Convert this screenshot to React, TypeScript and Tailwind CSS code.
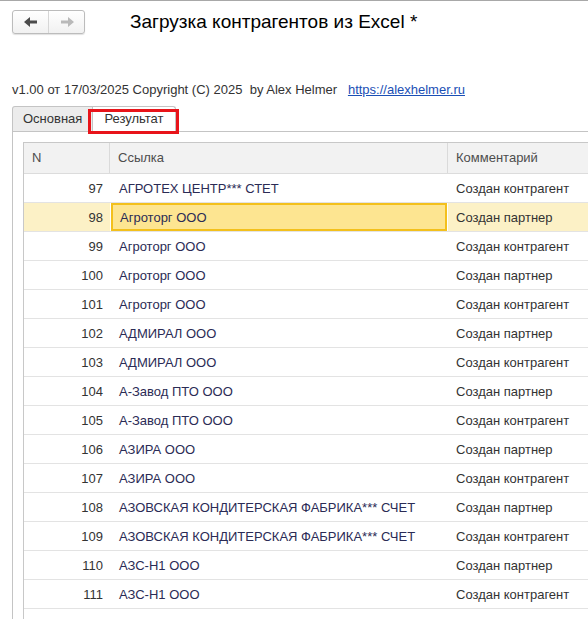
import React from "react";

interface Row {
  n: number;
  ref: string;
  comment: string;
}

const rows: Row[] = [
  { n: 97, ref: "АГРОТЕХ ЦЕНТР*** СТЕТ", comment: "Создан контрагент" },
  { n: 98, ref: "Агроторг ООО", comment: "Создан партнер" },
  { n: 99, ref: "Агроторг ООО", comment: "Создан контрагент" },
  { n: 100, ref: "Агроторг ООО", comment: "Создан партнер" },
  { n: 101, ref: "Агроторг ООО", comment: "Создан контрагент" },
  { n: 102, ref: "АДМИРАЛ ООО", comment: "Создан партнер" },
  { n: 103, ref: "АДМИРАЛ ООО", comment: "Создан контрагент" },
  { n: 104, ref: "А-Завод ПТО ООО", comment: "Создан партнер" },
  { n: 105, ref: "А-Завод ПТО ООО", comment: "Создан контрагент" },
  { n: 106, ref: "АЗИРА ООО", comment: "Создан партнер" },
  { n: 107, ref: "АЗИРА ООО", comment: "Создан контрагент" },
  { n: 108, ref: "АЗОВСКАЯ КОНДИТЕРСКАЯ ФАБРИКА*** СЧЕТ", comment: "Создан партнер" },
  { n: 109, ref: "АЗОВСКАЯ КОНДИТЕРСКАЯ ФАБРИКА*** СЧЕТ", comment: "Создан контрагент" },
  { n: 110, ref: "АЗС-Н1 ООО", comment: "Создан партнер" },
  { n: 111, ref: "АЗС-Н1 ООО", comment: "Создан контрагент" },
  { n: 112, ref: "АСНТ-РЕНТ ООО", comment: "Создан партнер" },
];

const SELECTED = 98;

function Arrow({ dir, color }: { dir: "left" | "right"; color: string }) {
  return (
    <svg width="14" height="10" viewBox="0 0 14 10" className={dir === "right" ? "rotate-180" : ""}>
      <path d="M0 5 L6 0 L6 3.5 L13 3.5 L13 6.5 L6 6.5 L6 10 Z" fill={color} />
    </svg>
  );
}

export default function App() {
  return (
    <div
      className="relative h-[619px] w-[588px] overflow-hidden bg-white border-t border-[#a8a8a8] text-[#333]"
      style={{ fontFamily: '"Liberation Sans", Arial, sans-serif' }}
    >
      {/* Header: nav + title */}
      <div className="flex items-center pl-3 pt-2 h-[33px]">
        <div className="flex h-[24px] w-[73px] rounded-[3px] border border-[#bcbcbc] bg-gradient-to-b from-white to-[#f1f1f1] shadow-[0_1px_1px_rgba(0,0,0,0.12)]">
          <div className="flex w-[36px] items-center justify-center border-r border-[#d6d6d6]">
            <Arrow dir="left" color="#4b4b4b" />
          </div>
          <div className="flex flex-1 items-center justify-center">
            <Arrow dir="right" color="#b9b9b9" />
          </div>
        </div>
        <div className="ml-[45px] text-[19px] leading-none text-black">
          Загрузка контрагентов из Excel *
        </div>
      </div>

      {/* Version line */}
      <div className="mt-[48px] pl-3 text-[13px] leading-[16px] text-[#333] whitespace-pre">
        {"v1.00 от 17/03/2025 Copyright (C) 2025  by Alex Helmer   "}
        <span className="text-[#1a4fb5] underline">https://alexhelmer.ru</span>
      </div>

      {/* Tabs */}
      <div className="mt-[8px] flex pl-3 h-[25px]">
        <div className="flex items-center rounded-tl-[3px] border border-b-0 border-[#c4c4c4] bg-[#ececec] px-[10px] text-[13px] text-[#333]">
          Основная
        </div>
        <div className="flex w-[83px] items-center rounded-tr-[3px] border border-l-0 border-b-0 border-[#c4c4c4] bg-white pl-[11px] text-[13px] text-[#333]">
          Результат
        </div>
      </div>

      {/* Panel */}
      <div className="ml-3 border-l border-t border-[#c4c4c4] pl-[10px] pt-[10px] h-[500px]">
        <div className="border-l border-t border-[#c8c8c8] w-[600px]">
          {/* Table header */}
          <div className="flex h-[31px] bg-[#f2f2f2] border-b border-[#dcdcdc] text-[13px] text-[#4d4d4d]">
            <div className="flex w-[86px] items-center border-r border-[#dadada] pl-[8px]">N</div>
            <div className="flex w-[338px] items-center border-r border-[#dadada] pl-[8px]">Ссылка</div>
            <div className="flex flex-1 items-center pl-[8px]">Комментарий</div>
          </div>
          {rows.map((r) => {
            const sel = r.n === SELECTED;
            return (
              <div
                key={r.n}
                className={
                  "flex h-[29px] border-b border-[#e3e3e3] text-[13px] " +
                  (sel ? "bg-[#fcf1c6]" : "bg-white")
                }
              >
                <div className="flex w-[86px] items-center justify-end pr-[7px] pt-[2px] text-[#333]">{r.n}</div>
                {sel ? (
                  <div className="flex w-[338px] border-x border-white">
                    <div className="flex flex-1 items-center border-2 border-[#f3c01c] bg-[#fde591] pl-[7px] pt-[1px] text-[#2b2b55]">
                      {r.ref}
                    </div>
                  </div>
                ) : (
                  <div className="flex w-[338px] items-center pl-[9px] pt-[2px] text-[#2b2b55]">{r.ref}</div>
                )}
                <div className="flex flex-1 items-center pl-[8px] pt-[2px] text-[#333]">{r.comment}</div>
              </div>
            );
          })}
        </div>
      </div>

      {/* Red annotation around the active tab */}
      <div className="pointer-events-none absolute left-[88px] top-[108px] h-[25px] w-[91px] border-[3px] border-[#e8141a]" />
    </div>
  );
}
